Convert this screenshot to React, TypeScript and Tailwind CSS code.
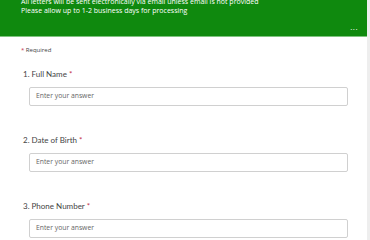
import React from 'react';

const questions = [
  { n: 1, label: 'Full Name' },
  { n: 2, label: 'Date of Birth' },
  { n: 3, label: 'Phone Number' },
];

export default function App() {
  return (
    <div className="flex h-[240px] w-[370px] overflow-hidden bg-white font-['Open_Sans',sans-serif]">
      <div className="flex w-[367px] shrink-0 flex-col">
        {/* Header banner */}
        <div className="relative h-[37px] shrink-0 border-b border-[#7fc47f] bg-[#0f890e] px-[21px] pt-0 text-[7px] leading-[9px] text-white">
          <p className="-mt-[3px]">All letters will be sent electronically via email unless email is not provided</p>
          <p>Please allow up to 1-2 business days for processing</p>
          <span className="absolute bottom-[5px] right-[9px] text-[8px] leading-none tracking-[0.5px]">...</span>
        </div>

        {/* Form body */}
        <div className="flex flex-col px-[21px] pt-[9px]">
          <p className="text-[6px] text-[#444]">
            <span className="text-[#c4314b]">*</span> Required
          </p>

          <div className="mt-[13px] flex flex-col gap-[28px]">
            {questions.map((q) => (
              <div key={q.n} className="flex flex-col">
                <p className="pl-[2px] font-['Lato',sans-serif] text-[8px] leading-[12px] text-[#444]">
                  {q.n}. {q.label} <span className="text-[#c4314b]">*</span>
                </p>
                <div className="ml-[8px] mt-[7px] flex h-[19px] w-[319px] items-center rounded-[2px] border border-[#d0d0d0] px-[6px] text-[6.8px] text-[#666]">
                  Enter your answer
                </div>
              </div>
            ))}
          </div>
        </div>
      </div>
      <div className="w-[3px] shrink-0 bg-[#eeeeee]" />
    </div>
  );
}
